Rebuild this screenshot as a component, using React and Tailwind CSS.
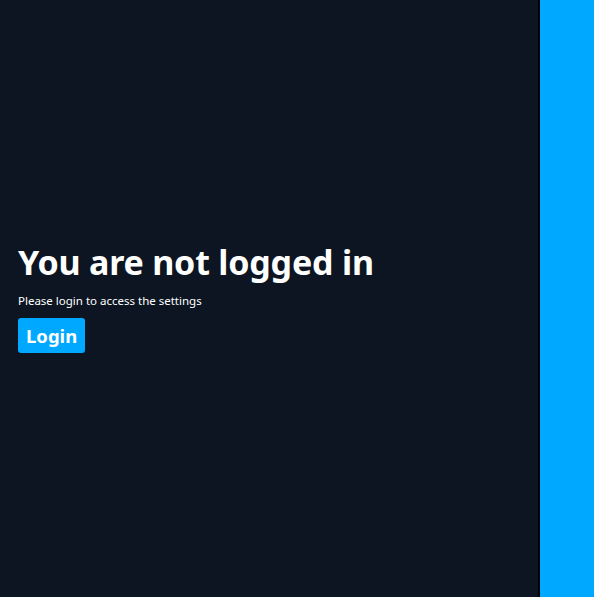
export default function App() {
  return (
    <div className="flex h-[597px] w-full bg-[#0c1521]" style={{ fontFamily: '"Noto Sans", "Liberation Sans", sans-serif' }}>
      <main className="flex flex-1 flex-col justify-center px-[18px] pb-[3px]">
        <h1 className="text-[34px] font-bold leading-[42px] tracking-[-0.2px] text-white">You are not logged in</h1>
        <p className="mt-[10px] text-[11.5px] leading-[16px] text-white">Please login to access the settings</p>
        <div className="mt-[9px]">
          <button className="h-[35px] rounded-[3px] bg-[#00a8ff] px-[8px] text-[18.5px] font-bold text-white">Login</button>
        </div>
      </main>
      <div className="w-[2px] bg-[#000000]" />
      <aside className="w-[54px] bg-[#00a8ff]" />
    </div>
  )
}
